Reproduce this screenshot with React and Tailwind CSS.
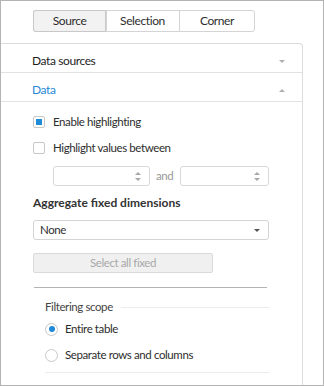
import React from "react";

const Tri = ({ dir = "down", color = "#aaa", w = 6, h = 3 }) => (
  <svg width={w} height={h} viewBox={`0 0 ${w} ${h}`} className="block">
    {dir === "down" ? (
      <polygon points={`0,0 ${w},0 ${w / 2},${h}`} fill={color} />
    ) : (
      <polygon points={`0,${h} ${w},${h} ${w / 2},0`} fill={color} />
    )}
  </svg>
);

const Spinner = () => (
  <div className="flex flex-col items-center gap-[3px] mr-[8px]">
    <Tri dir="up" color="#a8a8a8" w={6} h={3} />
    <Tri dir="down" color="#a8a8a8" w={6} h={3} />
  </div>
);

export default function App() {
  return (
    <div
      className="w-[324px] h-[386px] border border-[#b4b4b4] bg-white flex flex-col overflow-hidden text-[12px] tracking-[-0.4px] text-[#2e2e2e]"
      style={{ fontFamily: 'Lato, "Open Sans", sans-serif' }}
    >
      {/* Tabs */}
      <div className="pt-[9px] pl-[32px] flex">
        <div className="flex h-[22px] w-[222px] rounded-[3px] border border-[#d4d4d4]">
          <div className="w-[74px] flex items-center justify-center bg-[#f2f2f2] border-r border-[#d4d4d4] rounded-l-[3px] shadow-[inset_0_0_0_1px_#c8c8c8] -m-px h-[22px]">
            Source
          </div>
          <div className="w-[74px] flex items-center justify-center border-r border-[#d4d4d4]">
            Selection
          </div>
          <div className="flex-1 flex items-center justify-center">Corner</div>
        </div>
      </div>

      {/* Card */}
      <div className="mt-[11px] w-[302px] flex-1 border-t border-r border-[#dcdcdc] rounded-tr-[4px] flex flex-col">
        <div className="h-[29px] pt-[6px] border-b border-[#e2e2e2] flex items-center justify-between pl-[31px] pr-[17px] text-[#1e1e1e]">
          <span>Data sources</span>
          <Tri dir="down" color="#b0b0b0" w={6} h={3} />
        </div>
        <div className="h-[29px] pt-[6px] border-b border-[#e2e2e2] flex items-center justify-between pl-[31px] pr-[17px] text-[#2a8ad6]">
          <span>Data</span>
          <Tri dir="up" color="#b0b0b0" w={6} h={3} />
        </div>

        <div className="pl-[32px] pt-[7px] flex flex-col text-[11.5px]">
          <div className="h-[26px] flex items-center gap-[8px]">
            <div className="w-[12px] h-[12px] rounded-[2px] border border-[#c8c8c8] flex items-center justify-center">
              <div className="w-[6px] h-[6px] bg-[#1f8ad6]" />
            </div>
            <span>Enable highlighting</span>
          </div>
          <div className="h-[26px] flex items-center gap-[8px]">
            <div className="w-[12px] h-[12px] rounded-[2px] border border-[#c8c8c8]" />
            <span>Highlight values between</span>
          </div>

          <div className="mt-[5px] h-[20px] pl-[20px] flex items-center">
            <div className="w-[97px] h-[20px] border border-[#d8d8d8] rounded-[3px] flex items-center justify-end">
              <Spinner />
            </div>
            <span className="ml-[6px] mr-[7px] text-[#999]">and</span>
            <div className="w-[89px] h-[20px] border border-[#d8d8d8] rounded-[3px] flex items-center justify-end">
              <Spinner />
            </div>
          </div>

          <div className="mt-[9px] h-[16px] flex items-center font-bold text-[12px] tracking-normal text-[#333]">
            Aggregate fixed dimensions
          </div>

          <div className="mt-[9px] w-[236px] h-[20px] border border-[#d4d4d4] rounded-[3px] flex items-center justify-between pl-[6px] pr-[8px]">
            <span>None</span>
            <Tri dir="down" color="#555" w={6} h={3} />
          </div>

          <div className="mt-[13px] w-[180px] h-[20px] border border-[#dadada] bg-[#f0f0f0] rounded-[2px] flex items-center justify-center text-[#a8a8a8]">
            Select all fixed
          </div>

          <div className="mt-[14px] ml-[1px] w-[233px] h-px bg-[#b4b4b4]" />

          <div className="pl-[12px] flex flex-col w-[237px]">
            <div className="mt-[11px] h-[16px] flex items-center gap-[8px] text-[#444]">
              <span>Filtering scope</span>
              <div className="flex-1 h-px bg-[#ececec]" />
            </div>
            <div className="mt-[1px] h-[26px] flex items-center gap-[7px]">
              <div className="w-[13px] h-[13px] rounded-full border border-[#c8c8c8] flex items-center justify-center">
                <div className="w-[6px] h-[6px] rounded-full bg-[#1f8ad6]" />
              </div>
              <span>Entire table</span>
            </div>
            <div className="h-[26px] flex items-center gap-[7px]">
              <div className="w-[13px] h-[13px] rounded-full border border-[#c8c8c8]" />
              <span>Separate rows and columns</span>
            </div>
            <div className="mt-[4px] h-px bg-[#ececec]" />
          </div>
        </div>
      </div>
    </div>
  );
}
